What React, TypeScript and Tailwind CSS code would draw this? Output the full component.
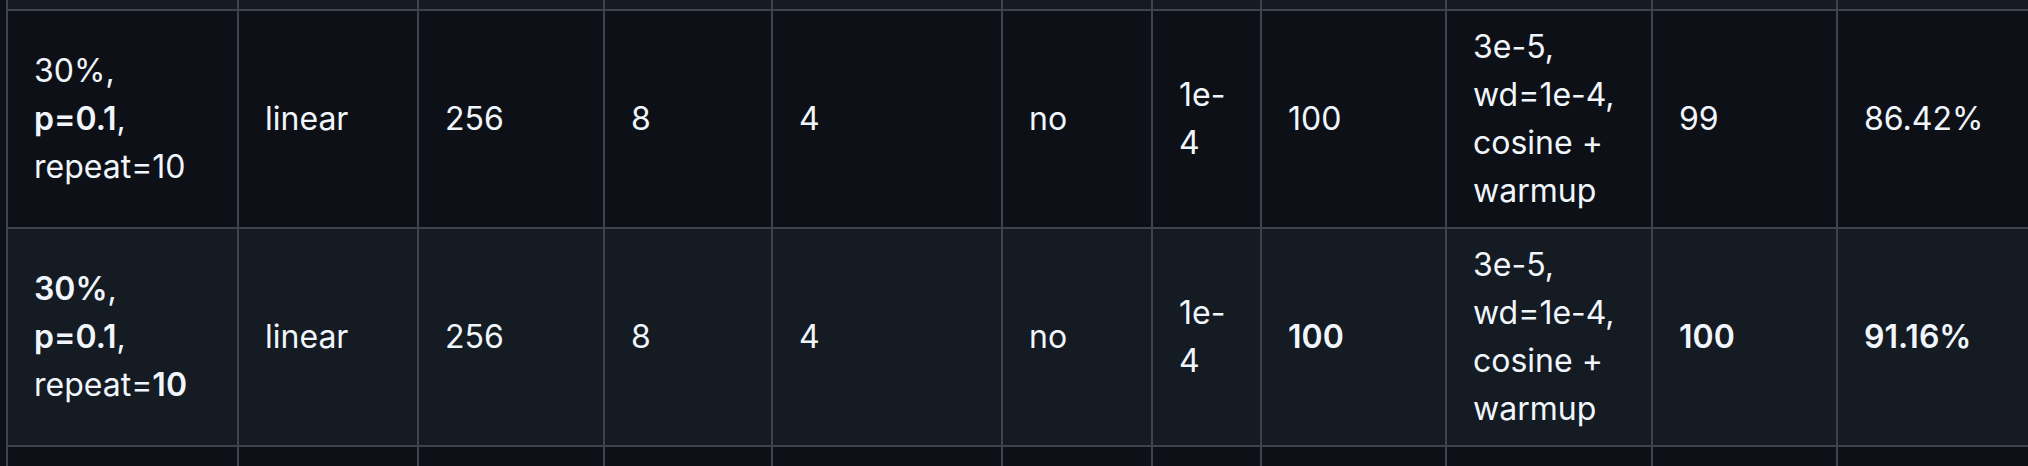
import React from "react";

type Cell = React.ReactNode;

const rowA: Cell[] = [
  <>
    30%, <strong className="font-semibold">p=0.1</strong>, repeat=10
  </>,
  "linear",
  "256",
  "8",
  "4",
  "no",
  "1e-4",
  "100",
  "3e-5, wd=1e-4, cosine + warmup",
  "99",
  "86.42%",
];

const rowB: Cell[] = [
  <>
    <strong className="font-semibold">30%</strong>,{" "}
    <strong className="font-semibold">p=0.1</strong>, repeat=
    <strong className="font-semibold">10</strong>
  </>,
  "linear",
  "256",
  "8",
  "4",
  "no",
  "1e-4",
  <strong className="font-semibold">100</strong>,
  "3e-5, wd=1e-4, cosine + warmup",
  <strong className="font-semibold">100</strong>,
  <strong className="font-semibold">91.16%</strong>,
];

// column widths incl. the 2px right border
const widths = [
  "w-[231px]",
  "w-[180px]",
  "w-[186px]",
  "w-[168px]",
  "w-[230px]",
  "w-[150px]",
  "w-[109px]",
  "w-[185px]",
  "w-[206px]",
  "w-[185px]",
  "w-[260px]",
];

function cellBorder(i: number) {
  return i === 0
    ? "border-l-2 border-r-2 border-b-2 border-[#3d444d]"
    : "border-r-2 border-b-2 border-[#3d444d]";
}

function DataRow({ cells, striped }: { cells: Cell[]; striped: boolean }) {
  return (
    <tr className={striped ? "bg-[#151b23]" : "bg-[#0d1117]"}>
      {cells.map((c, i) => (
        <td
          key={i}
          className={`${cellBorder(i)} px-[26px] py-[12px] align-middle break-words`}
        >
          {c}
        </td>
      ))}
    </tr>
  );
}

function EdgeRow({ height, striped }: { height: string; striped: boolean }) {
  return (
    <tr className={striped ? "bg-[#151b23]" : "bg-[#0d1117]"}>
      {widths.map((_, i) => (
        <td key={i} className={`${cellBorder(i)} p-0`}>
          <div className={height} />
        </td>
      ))}
    </tr>
  );
}

export default function App() {
  return (
    <div className="w-[2028px] h-[466px] overflow-hidden bg-[#0d1117] pl-[6px]">
      <table
        className="table-fixed border-separate border-spacing-0 text-[32px] leading-[48px] text-[#f0f6fc] w-[2089px]"
        style={{ fontFamily: "Inter, 'Noto Sans', sans-serif" }}
      >
        <colgroup>
          {widths.map((w, i) => (
            <col key={i} className={i === 0 ? "w-[233px]" : w} />
          ))}
        </colgroup>
        <tbody>
          <EdgeRow height="h-[9px]" striped />
          <DataRow cells={rowA} striped={false} />
          <DataRow cells={rowB} striped />
          <EdgeRow height="h-[40px]" striped={false} />
        </tbody>
      </table>
    </div>
  );
}
